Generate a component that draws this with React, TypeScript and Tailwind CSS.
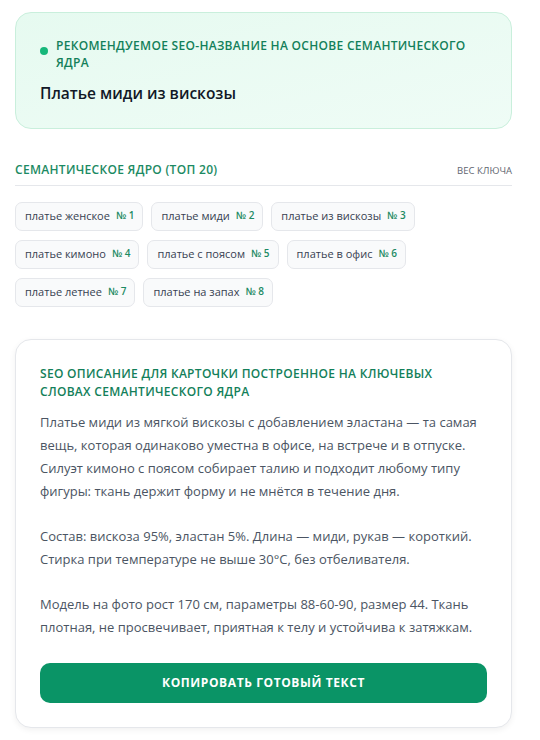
import React from "react";

const KEYWORDS = [
  { text: "платье женское", n: 1 },
  { text: "платье миди", n: 2 },
  { text: "платье из вискозы", n: 3 },
  { text: "платье кимоно", n: 4 },
  { text: "платье с поясом", n: 5 },
  { text: "платье в офис", n: 6 },
  { text: "платье летнее", n: 7 },
  { text: "платье на запах", n: 8 },
];

const PARAGRAPHS = [
  "Платье миди из мягкой вискозы с добавлением эластана — та самая вещь, которая одинаково уместна в офисе, на встрече и в отпуске. Силуэт кимоно с поясом собирает талию и подходит любому типу фигуры: ткань держит форму и не мнётся в течение дня.",
  "Состав: вискоза 95%, эластан 5%. Длина — миди, рукав — короткий. Стирка при температуре не выше 30°C, без отбеливателя.",
  "Модель на фото рост 170 см, параметры 88-60-90, размер 44. Ткань плотная, не просвечивает, приятная к телу и устойчива к затяжкам.",
];

export default function App() {
  return (
    <div
      className="min-h-[740px] bg-white pl-[15px] pt-[12px] pb-[12px]"
      style={{ fontFamily: '"Open Sans", "Noto Sans", sans-serif' }}
    >
      <div className="w-[497px]">
        {/* recommended title */}
        <div className="rounded-[16px] border border-[#c9efdc] bg-gradient-to-br from-[#e6faf0] to-[#effcf6] pl-[24px] pr-[24px] pt-[24px] pb-[24px]">
          <div className="flex items-start gap-[8px]">
            <span className="mt-[10px] h-[8px] w-[8px] shrink-0 rounded-full bg-[#16b77a]" />
            <p className="pr-[20px] text-[12px] font-semibold uppercase leading-[17px] tracking-[0.3px] text-[#13805a]">
              Рекомендуемое SEO-название на основе семантического ядра
            </p>
          </div>
          <h1 className="mt-[11px] text-[15.5px] font-semibold leading-[22px] text-[#111827]">
            Платье миди из вискозы
          </h1>
        </div>

        {/* semantic core */}
        <div className="mt-[32px] flex items-end justify-between border-b border-[#e5e7eb] pb-[6px]">
          <h2 className="text-[12px] font-semibold uppercase leading-[18px] tracking-[0.3px] text-[#1c8a63]">
            Семантическое ядро (ТОП 20)
          </h2>
          <span className="text-[9.5px] font-medium uppercase leading-[16px] text-[#5f6670]">
            Вес ключа
          </span>
        </div>

        <div className="mt-[16px] flex w-[420px] flex-wrap gap-x-[8px] gap-y-[9px]">
          {KEYWORDS.map((k) => (
            <div
              key={k.n}
              className="flex h-[29px] items-center gap-[6px] rounded-[7px] border border-[#e5e7eb] bg-[#f9fafb] pl-[9px] pr-[8px]"
            >
              <span className="text-[11px] text-[#374151]">{k.text}</span>
              <span className="-mt-[2px] text-[10px] font-semibold text-[#1c8a63]">№ {k.n}</span>
            </div>
          ))}
        </div>

        {/* description */}
        <div className="mt-[32px] rounded-[16px] border border-[#e5e7eb] bg-white px-[24px] pt-[25px] pb-[24px] shadow-[0_2px_6px_rgba(0,0,0,0.06)]">
          <h3 className="pr-[48px] text-[12px] font-semibold uppercase leading-[18px] tracking-[0.3px] text-[#13805a]">
            SEO описание для карточки построенное на ключевых словах семантического ядра
          </h3>
          <div className="mt-[10px] flex flex-col gap-[22px]">
            {PARAGRAPHS.map((p, i) => (
              <p key={i} className="text-[13px] leading-[23px] text-[#4b5563]">
                {p}
              </p>
            ))}
          </div>
          <button className="mt-[24px] flex h-[40px] w-full items-center justify-center rounded-[10px] bg-[#0a9466] text-[12px] font-bold uppercase tracking-[0.6px] text-white">
            Копировать готовый текст
          </button>
        </div>
      </div>
    </div>
  );
}
